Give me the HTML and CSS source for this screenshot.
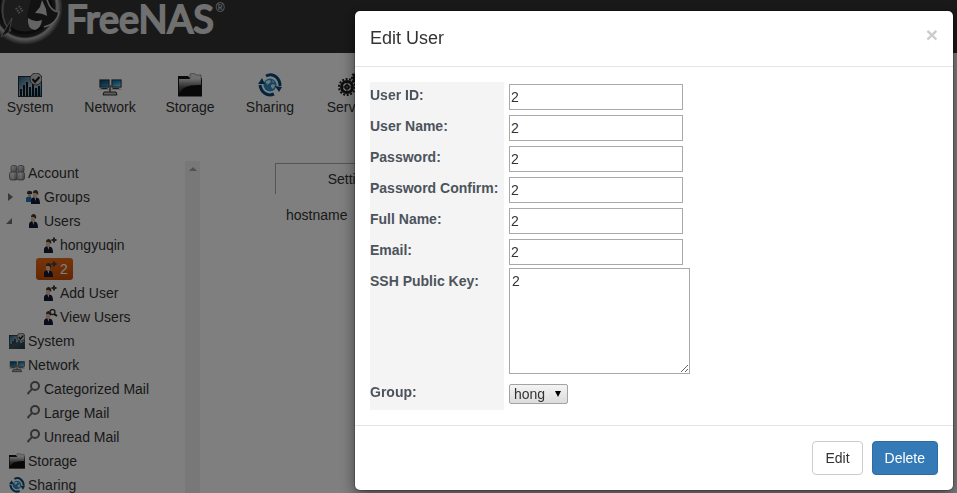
FILE: index.html
```html
<!DOCTYPE html>
<html lang="en">
<head>
<meta charset="utf-8">
<title>FreeNAS</title>
<link rel="stylesheet" href="styles.css">
</head>
<body>
<svg class="sprites" aria-hidden="true">
  <defs>
    <linearGradient id="screen" x1="0" y1="0" x2="1" y2="1"><stop offset="0" stop-color="#123f62"/><stop offset=".55" stop-color="#1a8cc4"/><stop offset="1" stop-color="#9cdcf4"/></linearGradient>
    <linearGradient id="panel" x1="0" y1="0" x2="1" y2="1"><stop offset="0" stop-color="#286387"/><stop offset=".55" stop-color="#a5c6d5"/><stop offset="1" stop-color="#2b82ac"/></linearGradient>
    <linearGradient id="folder" x1="0" y1="0" x2="0" y2="1"><stop offset="0" stop-color="#d8d8d8"/><stop offset=".5" stop-color="#555"/><stop offset="1" stop-color="#111"/></linearGradient>
    <linearGradient id="silver" x1="0" y1="0" x2="1" y2="1"><stop offset="0" stop-color="#f2f2f2"/><stop offset="1" stop-color="#777"/></linearGradient>
  </defs>
  <symbol id="system" viewBox="0 0 24 24">
    <path fill="#242a30" d="M0 3h24v21H0z"/><path fill="url(#panel)" d="M1 4h22v19H1z"/>
    <path fill="#111820" d="M2 16h2v7H2zM5 12h2v11H5zM8 9h2v14H8zM11 14h2v9h-2zM14 11h2v12h-2zM17 15h2v8h-2zM20 13h2v10h-2z"/>
    <circle cx="18" cy="6" r="6" fill="#c8c8c8" stroke="#454545"/><path d="m14.5 6 2.5 3 4.5-5" fill="none" stroke="#151515" stroke-width="2"/>
  </symbol>
  <symbol id="network" viewBox="0 0 24 24">
    <path fill="#b5b5b5" d="M1 6h11v9H1zM13 6h11v9H13z"/><path fill="url(#screen)" stroke="#303030" stroke-width=".8" d="M2 7h9v7H2zM14 7h9v7h-9z"/>
    <path fill="#383838" d="M4 15h5l2 2H0zM15 15h5l4 2H13z"/><path fill="#cfcfcf" d="M0 16h24v1H0z"/><path fill="#777" d="M11 12h2v7h-2z"/><path fill="#bbb" stroke="#333" d="M6 19h12l1 3H5z"/>
  </symbol>
  <symbol id="storage" viewBox="0 0 24 24">
    <path fill="#171717" d="M0 3h10l2 2h12v19H0z"/><path fill="#ddd" stroke="#777" stroke-width=".7" d="M12 5V1l4-1 2 2h5v5H12z"/><path fill="url(#folder)" d="M1 6h22v17H1z"/><path fill="#111" d="M1 21Q5 11 23 12v11H1z"/><path fill="#888" d="M0 23h24v1H0z"/>
  </symbol>
  <symbol id="sharing" viewBox="0 0 24 24">
    <circle cx="12" cy="12" r="6.5" fill="#2a8dc5"/><path fill="#d9eff8" d="m8 8 3-1 2 1-1 2-2 1v1l-2-2zM13 12l3-1 1 2-2 3-2-2zM14 7l2 2-1 1z"/>
    <path fill="none" stroke="#09497a" stroke-width="3" d="M8 3c7-4 14 2 14 10M16 21C9 24 3 19 2 12"/><path fill="#09497a" d="m17 13 7 1-3 5zM0 11l4-6 3 6z"/>
  </symbol>
  <symbol id="service" viewBox="0 0 24 24">
    <g fill="none" stroke="#1c1c1c"><circle cx="9" cy="14" r="5.5" stroke-width="3"/><circle cx="9" cy="14" r="8" stroke-width="2" stroke-dasharray="2 1.6"/><circle cx="9" cy="14" r="2" stroke-width="1.5"/><path d="M9 9v10M4 14h10"/><circle cx="20" cy="5" r="4" stroke-width="3"/><circle cx="20" cy="5" r="6" stroke-width="2" stroke-dasharray="2 1.5"/></g>
  </symbol>
  <symbol id="account" viewBox="0 0 16 16">
    <g stroke="#555" stroke-width=".7" fill="url(#silver)"><rect x="2" y=".5" width="6" height="7" rx="2"/><rect x="9" y=".5" width="6" height="7" rx="2"/><rect x=".5" y="7" width="8" height="8" rx="2"/><rect x="8" y="7" width="7.5" height="8" rx="2"/></g><path stroke="#eee" d="M4 8v6M12 8v6"/>
  </symbol>
  <symbol id="person" viewBox="0 0 16 16">
    <path fill="#101936" d="M3 15v-4q0-2 3-3l4 1q2 1 2 6z"/><path fill="#e8c098" d="M5 4h4v4L8 9 5 8z"/><path fill="#453831" d="M5 4q0-3 3-3 3 1 2 5l-2-2z"/><path fill="#ddd" d="m6 8 2 1v3z"/>
  </symbol>
  <symbol id="groups" viewBox="0 0 16 16">
    <path fill="#1f75b8" d="M0 13V9q1-2 5-1l2 5z"/><path fill="#d0aa88" d="M2 4h3v4H2z"/><path fill="#353033" d="M1 5q0-4 3-3 3 0 2 3z"/><use href="#person" x="2" width="16" height="16"/>
  </symbol>
  <symbol id="adduser" viewBox="0 0 16 16">
    <use href="#person" x="-1" y="1" width="16" height="16"/><path d="M9.500 3h5M12 .5v5" stroke="#404040" stroke-width="2"/>
  </symbol>
  <symbol id="viewuser" viewBox="0 0 16 16">
    <use href="#person" x="-1" y="1" width="16" height="16"/><circle cx="10.500" cy="3" r="2.500" fill="none" stroke="#333" stroke-width="1.300"/><path d="m12 5 3 2" stroke="#222" stroke-width="2"/>
  </symbol>
  <symbol id="search" viewBox="0 0 16 16"><circle cx="9" cy="5" r="4" fill="none" stroke="#646464" stroke-width="2"/><path d="m6 8-4.500 5" stroke="#707070" stroke-width="2"/></symbol>
</svg>

<header class="banner">
  <svg class="logo" viewBox="0 0 62 50" aria-hidden="true">
    <defs><radialGradient id="orb"><stop offset="0" stop-color="#484848"/><stop offset=".7" stop-color="#303030"/><stop offset=".78" stop-color="#222"/><stop offset=".84" stop-color="#b5b5b5"/><stop offset="1" stop-color="#333"/></radialGradient></defs>
    <circle cx="25" cy="7" r="38" fill="url(#orb)"/>
    <circle cx="25" cy="7" r="26" fill="#383838" stroke="#161616" stroke-width="3"/>
    <path fill="none" stroke="#777" stroke-width="2" d="M4 0Q-1 20 11 31"/>
    <path fill="#222" stroke="#858585" d="M1 37 12 18l-3 14z"/>
    <path fill="#242424" d="M31 0h15q5 12 13 12-2 12-15 15-14 1-17-12 2-8 4-15z"/>
    <path fill="none" stroke="#bbb" stroke-width="1.500" d="M47 0q4 12 12 12-2 12-15 15"/>
    <path fill="#c8c8c8" d="m35 13 5-6 2-7 4 9 1 7q-5-3-12-3zM28 18q7 5 14 2-1 8-7 10-8-1-7-12z"/>
    <path stroke="#999" stroke-width="2" stroke-dasharray="1.500 1" d="m16 8 4 6m-1-8 4 6"/>
  </svg>
  <span class="wordmark">FreeNAS</span><sup class="registered">®</sup>
</header>

<nav class="toolbar">
  <a href="#s"><svg><use href="#system"/></svg>System</a>
  <a href="#n"><svg><use href="#network"/></svg>Network</a>
  <a href="#t"><svg><use href="#storage"/></svg>Storage</a>
  <a href="#h"><svg><use href="#sharing"/></svg>Sharing</a>
  <a href="#v"><svg><use href="#service"/></svg>Service</a>
</nav>

<div class="workspace">
  <aside class="sidebar">
    <ul class="tree">
      <li><a href="#a"><svg><use href="#account"/></svg>Account</a></li>
      <li class="level1"><i class="twisty closed"></i><a href="#g"><svg><use href="#groups"/></svg>Groups</a></li>
      <li class="level1"><i class="twisty open"></i><a href="#u"><svg><use href="#person"/></svg>Users</a></li>
      <li class="level2"><a href="#u1"><svg><use href="#adduser"/></svg>hongyuqin</a></li>
      <li class="level2"><a class="selected" href="#u2"><svg><use href="#adduser"/></svg>2</a></li>
      <li class="level2"><a href="#u3"><svg><use href="#adduser"/></svg>Add User</a></li>
      <li class="level2"><a href="#u4"><svg><use href="#viewuser"/></svg>View Users</a></li>
      <li><a href="#s"><svg><use href="#system"/></svg>System</a></li>
      <li><a href="#n"><svg><use href="#network"/></svg>Network</a></li>
      <li class="level1"><a href="#m1"><svg><use href="#search"/></svg>Categorized Mail</a></li>
      <li class="level1"><a href="#m2"><svg><use href="#search"/></svg>Large Mail</a></li>
      <li class="level1"><a href="#m3"><svg><use href="#search"/></svg>Unread Mail</a></li>
      <li><a href="#t"><svg><use href="#storage"/></svg>Storage</a></li>
      <li><a href="#h"><svg><use href="#sharing"/></svg>Sharing</a></li>
    </ul>
    <div class="track"><i></i></div>
  </aside>
  <main class="content">
    <a class="tab" href="#settings">Settings</a>
    <p class="field-name">hostname</p>
  </main>
</div>

<div class="backdrop">
  <section class="dialog" role="dialog" aria-modal="true" aria-labelledby="title">
    <header class="dialog-head">
      <h4 id="title">Edit User</h4>
      <button class="close" type="button" aria-label="Close">×</button>
    </header>
    <form class="fields">
      <label for="uid">User ID:</label><div><input id="uid" type="text" value="2"></div>
      <label for="uname">User Name:</label><div><input id="uname" type="text" value="2"></div>
      <label for="pw">Password:</label><div><input id="pw" type="text" value="2"></div>
      <label for="pw2">Password Confirm:</label><div><input id="pw2" type="text" value="2"></div>
      <label for="full">Full Name:</label><div><input id="full" type="text" value="2"></div>
      <label for="email">Email:</label><div><input id="email" type="text" value="2"></div>
      <label for="ssh">SSH Public Key:</label><div class="key"><textarea id="ssh">2</textarea></div>
      <label for="group">Group:</label><div class="choice"><select id="group"><option>hong</option></select><svg viewBox="0 0 6 6" aria-hidden="true"><path d="M0 0h6L3 6z"/></svg></div>
    </form>
    <footer class="dialog-foot">
      <button class="btn" type="button">Edit</button>
      <button class="btn primary" type="button">Delete</button>
    </footer>
  </section>
</div>
</body>
</html>
```
FILE: styles.css
```css
* { box-sizing: border-box; }

body {
  margin: 0;
  height: 100vh;
  overflow: hidden;
  display: flex;
  flex-direction: column;
  background: #fff;
  color: #333;
  font: 14px/20px "Liberation Sans", Arial, sans-serif;
}

a { color: inherit; text-decoration: none; }
.sprites { position: absolute; width: 0; height: 0; }

.banner {
  flex: none;
  display: flex;
  height: 53px;
  background: #333;
  color: #e0e0e0;
}
.logo { width: 62px; height: 50px; margin-right: 4px; }
.wordmark { font: 400 38px/36px Lato, sans-serif; -webkit-text-stroke: 2px #e0e0e0; }
.registered { margin-left: 2px; font-size: 12px; line-height: 16px; }

.toolbar { flex: none; display: flex; gap: 20px; height: 108px; padding-top: 20px; }
.toolbar a { display: flex; flex-direction: column; align-items: center; width: 60px; }
.toolbar svg { width: 24px; height: 24px; }

.workspace { flex: 1; display: flex; min-height: 0; }
.sidebar { display: flex; width: 200px; overflow: hidden; }
.tree { flex: 1; margin: 0; padding: 0; list-style: none; }
.tree li { display: flex; align-items: center; height: 24px; padding-left: 6px; }
.tree .level1 { padding-left: 22px; position: relative; }
.tree .level2 { padding-left: 36px; }
.tree a { display: flex; align-items: center; gap: 3px; height: 22px; padding: 0 5px 0 3px; }
.tree .level1 a { gap: 2px; padding-left: 4px; }
.tree .level2 a { gap: 2px; padding-left: 6px; }
.tree svg { width: 16px; height: 16px; }
.tree .selected { border-radius: 3px; background: linear-gradient(#ee6a12, #c94d05); color: #fff; }
.twisty { position: absolute; left: 8px; }
.closed { border: 4px solid transparent; border-left: 5px solid #77706c; border-right: 0; }
.open { left: 6px; border-left: 6px solid transparent; border-bottom: 6px solid #77706c; }
.track { width: 15px; padding: 6px 4px; background: #f1f1f1; }
.track i { display: block; border: 4px solid transparent; border-top: 0; border-bottom-color: #a3a3a3; }

.content { flex: 1; padding: 2px 0 0 75px; }
.tab {
  display: block;
  width: 156px;
  height: 31px;
  border: 1px solid #aaa;
  border-bottom: 0;
  line-height: 30px;
  text-align: center;
}
.field-name { margin: 11px; }

.backdrop {
  position: fixed;
  inset: 0;
  display: flex;
  justify-content: flex-end;
  align-items: flex-start;
  padding: 11px 4px;
  background: rgba(0, 0, 0, .5);
}
.dialog {
  width: 598px;
  max-width: 100%;
  border-radius: 5px;
  background: #fff;
  box-shadow: 0 0 0 1px rgba(0, 0, 0, .2), 0 5px 15px rgba(0, 0, 0, .5);
}
.dialog-head {
  display: flex;
  justify-content: space-between;
  padding: 15px;
  border-bottom: 1px solid #e5e5e5;
}
h4 { margin: 0; font-size: 18px; font-weight: 400; line-height: 25px; }
.close {
  height: 18px;
  padding: 0;
  border: 0;
  background: none;
  color: #ccc;
  font: 700 21px/18px "Liberation Sans", Arial, sans-serif;
}

.fields {
  display: grid;
  grid-template-columns: 134px 1fr;
  column-gap: 5px;
  padding: 15px;
}
.fields label { padding-top: 3px; background: #f4f4f4; color: #4c535c; font-weight: 700; }
.fields div { height: 31px; padding-top: 2px; }
.fields input, .fields textarea {
  display: block;
  border: 1px solid #a9a9a9;
  background: #fff;
  color: #333;
  font: inherit;
}
.fields input { width: 174px; height: 26px; padding: 1px; }
.fields .key { height: 111px; padding: 0; }
.fields textarea { width: 181px; height: 106px; padding: 2px; }
.fields .choice { position: relative; padding-top: 5px; }
.choice select {
  display: block;
  appearance: none;
  width: 59px;
  height: 20px;
  padding: 0 4px;
  border: 1px solid #a3a3a3;
  border-radius: 2px;
  background: linear-gradient(#f4f4f4, #dcdcdc);
  color: #333;
  font: inherit;
  line-height: 18px;
}
.choice svg { position: absolute; left: 46px; top: 12px; width: 6px; height: 6px; pointer-events: none; }

.dialog-foot {
  display: flex;
  justify-content: flex-end;
  gap: 9px;
  padding: 15px;
  border-top: 1px solid #e5e5e5;
}
.btn {
  height: 34px;
  padding: 6px 12px;
  border: 1px solid #ccc;
  border-radius: 4px;
  background: #fff;
  color: #333;
  font: inherit;
}
.primary { border-color: #2e6da4; background: #337ab7; color: #fff; }
```
